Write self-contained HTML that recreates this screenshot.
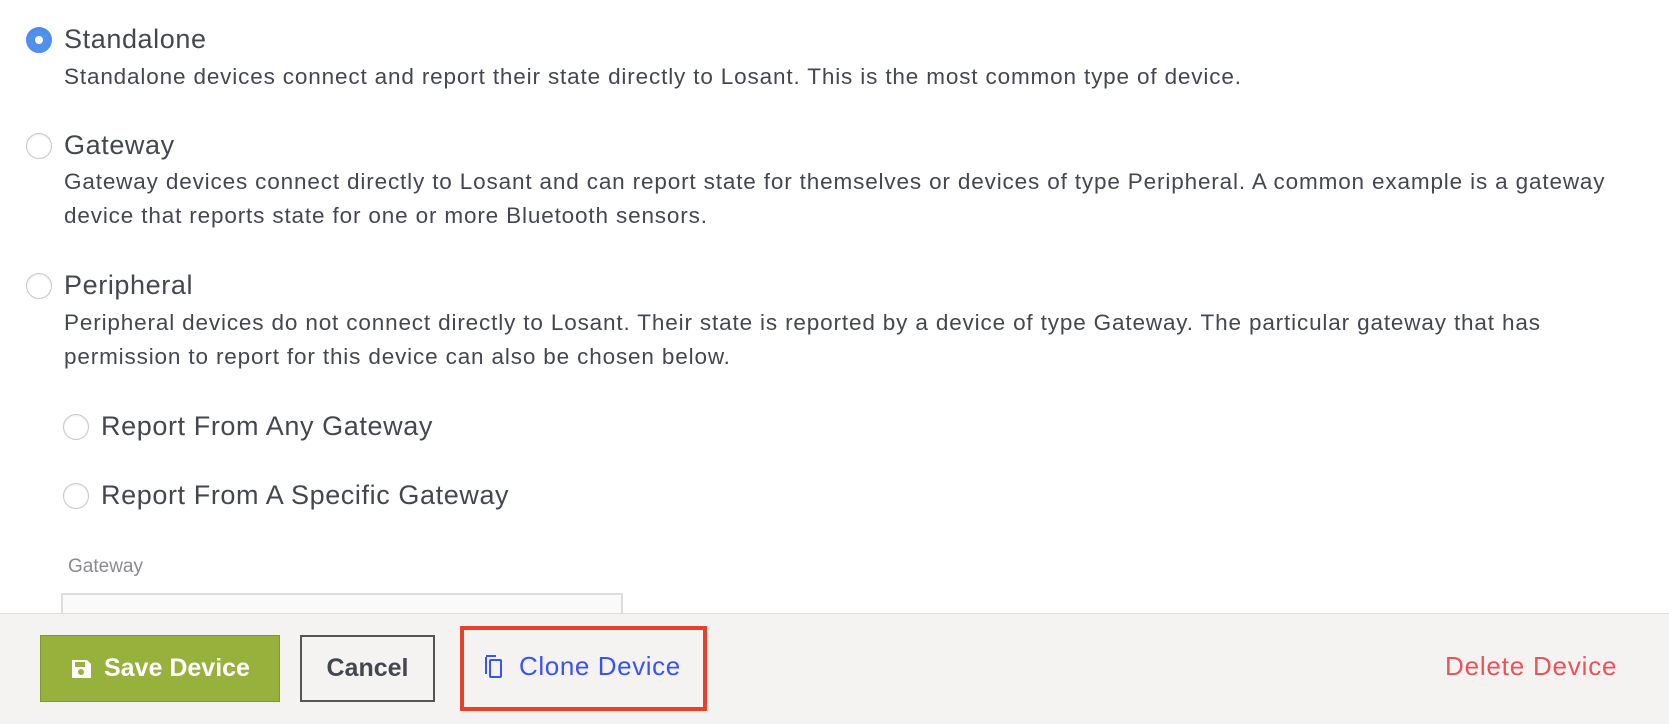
<!DOCTYPE html>
<html><head><style>
body{margin:0;width:1669px;height:723px;overflow:hidden;background:#fff;font-family:"Liberation Sans",sans-serif;color:#45474f;position:relative}
.a{position:absolute;white-space:nowrap}
.r{position:absolute;width:26px;height:26px;border-radius:50%;border:1px solid #c8c8c8;background:#fff;box-sizing:border-box;box-shadow:inset 0 1px 2px rgba(0,0,0,.08)}
.t{font-size:27px;line-height:30px;letter-spacing:0.6px}
.d{font-size:22.5px;line-height:34px;letter-spacing:0.85px}
</style></head><body>
<div class="r" style="left:26px;top:27px;background:#5090ee;border-color:#5090ee"><div style="position:absolute;left:8px;top:8px;width:8px;height:8px;border-radius:50%;background:#fff"></div></div>
<div class="a t" style="left:64px;top:24px">Standalone</div>
<div class="a d" style="left:64px;top:60px">Standalone devices connect and report their state directly to Losant. This is the most common type of device.</div>
<div class="r" style="left:26px;top:133px"></div>
<div class="a t" style="left:64px;top:130px">Gateway</div>
<div class="a d" style="left:64px;top:165px">Gateway devices connect directly to Losant and can report state for themselves or devices of type Peripheral. A common example is a gateway<br>device that reports state for one or more Bluetooth sensors.</div>
<div class="r" style="left:26px;top:273px"></div>
<div class="a t" style="left:64px;top:270px">Peripheral</div>
<div class="a d" style="left:64px;top:306px">Peripheral devices do not connect directly to Losant. Their state is reported by a device of type Gateway. The particular gateway that has<br>permission to report for this device can also be chosen below.</div>
<div class="r" style="left:63px;top:414px"></div>
<div class="a t" style="left:101px;top:411px">Report From Any Gateway</div>
<div class="r" style="left:63px;top:483px"></div>
<div class="a t" style="left:101px;top:480px">Report From A Specific Gateway</div>
<div class="a" style="left:68px;top:556px;font-size:19px;color:#8a8b90">Gateway</div>
<div class="a" style="left:61px;top:593px;width:562px;height:40px;border:2px solid #ddd;background:#fafafa;box-sizing:border-box"></div>
<div class="a" style="left:0;top:613px;width:1669px;height:110px;background:#f4f3f1;border-top:1px solid #ddd"></div>
<div class="a" style="left:40px;top:635px;width:240px;height:67px;background:#97b13c;border:1px solid #7f9a2e;box-sizing:border-box;color:#fff;font-size:25px;line-height:65px;font-weight:bold">
<svg style="position:absolute;left:29px;top:22px" width="22" height="22" viewBox="0 0 22 22"><path d="M2 2h15l4 4v14H2z" fill="#fff"/><rect x="5" y="4" width="10" height="5" fill="#97b13c"/><circle cx="11" cy="14" r="3" fill="#97b13c"/></svg>
<span style="position:absolute;left:63px">Save Device</span></div>
<div class="a" style="left:300px;top:635px;width:135px;height:67px;border:2px solid #555;box-sizing:border-box;color:#45474f;font-size:25px;line-height:63px;font-weight:bold;text-align:center">Cancel</div>
<div class="a" style="left:460px;top:626px;width:247px;height:85px;border:4px solid #e8402a;box-sizing:border-box"></div>
<svg class="a" style="left:484px;top:654px" width="20" height="26" viewBox="0 0 20 26"><path d="M2 3v17" stroke="#3a54f0" stroke-width="2" fill="none"/><path d="M2 2h10" stroke="#3a54f0" stroke-width="2"/><rect x="6" y="6" width="11" height="17" rx="1" stroke="#3a54f0" stroke-width="2" fill="none"/></svg>
<div class="a" style="left:519px;top:651px;font-size:26px;color:#3a54f0;letter-spacing:0.6px">Clone Device</div>
<div class="a" style="left:1445px;top:651px;font-size:26px;color:#e5555a;letter-spacing:0.8px">Delete Device</div>
</body></html>
